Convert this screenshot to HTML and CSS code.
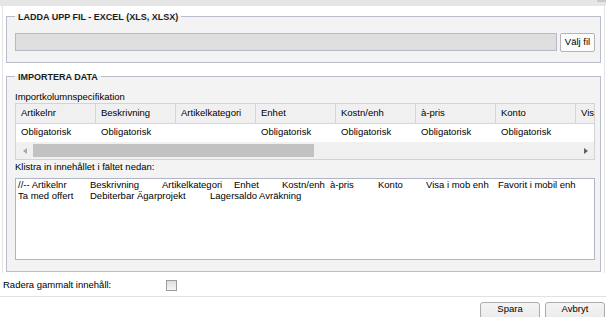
FILE: index.html
```html
<!DOCTYPE html>
<html lang="sv">
<head>
    <meta charset="UTF-8">
    <meta name="viewport" content="width=device-width, initial-scale=1.0">
    <title>Importera artiklar</title>
    <link rel="stylesheet" href="styles.css">
</head>
<body>
    <div class="topbar"><span class="corner"></span></div>
    <div class="panel">
        <fieldset class="group">
            <legend>LADDA UPP FIL - EXCEL (XLS, XLSX)</legend>
            <div class="file-row">
                <div class="file-name"></div>
                <button class="btn-pick">Välj fil</button>
            </div>
        </fieldset>
        <fieldset class="group group-import">
            <legend>IMPORTERA DATA</legend>
            <div class="caption">Importkolumnspecifikation</div>
            <div class="grid">
                <table>
                    <tr>
                        <th>Artikelnr</th><th>Beskrivning</th><th>Artikelkategori</th><th>Enhet</th>
                        <th>Kostn/enh</th><th>à-pris</th><th>Konto</th><th class="last">Visa</th>
                    </tr>
                    <tr>
                        <td>Obligatorisk</td><td>Obligatorisk</td><td></td><td>Obligatorisk</td>
                        <td>Obligatorisk</td><td>Obligatorisk</td><td>Obligatorisk</td><td class="last"></td>
                    </tr>
                </table>
                <div class="hscroll">
                    <span class="arrow"><i class="tri-left"></i></span>
                    <span class="thumb"></span>
                    <span class="track"></span>
                    <span class="arrow"><i class="tri-right"></i></span>
                </div>
            </div>
            <div class="caption caption-paste">Klistra in innehållet i fältet nedan:</div>
            <textarea class="paste" spellcheck="false">//-- Artikelnr	Beskrivning	Artikelkategori	Enhet	Kostn/enh	à-pris	Konto	Visa i mob enh	Favorit i mobil enh
Ta med offert	Debiterbar Ägarprojekt	Lagersaldo Avräkning</textarea>
        </fieldset>
    </div>
    <div class="option-row">
        <label for="clearOld">Radera gammalt innehåll:</label>
        <input type="checkbox" id="clearOld">
    </div>
    <div class="divider"></div>
    <div class="footer">
        <button class="btn">Spara</button>
        <button class="btn">Avbryt</button>
    </div>
</body>
</html>
```

FILE: styles.css
```css
body{
    margin: 0;
    background: #ffffff;
    font-family: "Liberation Sans", Arial, sans-serif;
    font-size: 9.5px;
    line-height: 11px;
    color: #000;
}
.topbar{
    height: 6px;
    background: #e6e6e6;
    display: flex;
    justify-content: flex-end;
}
.topbar .corner{
    width: 9px;
    height: 2px;
    background: #c9c9c9;
}
.panel{
    margin: 0 1px 0 2px;
    padding: 4px 0 1px;
    border-left: 1px solid #e4e4e4;
    border-right: 1px solid #e4e4e4;
}
.group{
    margin: 0 3px;
    padding: 10px 5px 10px 8px;
    border: 1px solid #babdcc;
    background: #f3f3f3;
    min-width: 0;
}
.group legend{
    padding: 2px 3px 0;
    font-size: 9px;
    font-weight: bold;
    line-height: 11px;
    color: #1c1c1c;
}
.group-import{
    margin-top: 7px;
    padding: 8px 5px 11px 8px;
}
.file-row{
    display: flex;
    gap: 3px;
    align-items: flex-start;
}
.file-name{
    flex: 1;
    height: 18px;
    box-sizing: border-box;
    background: #dedede;
    border: 1px solid #b6b9c8;
}
.btn-pick{
    width: 35px;
    height: 19px;
    margin: 0;
    padding: 0 0 2px;
    font: inherit;
    color: #000;
    background: #fcfcfc;
    border: 1px solid #b4b4b4;
    border-radius: 2px;
}
.caption{
    margin-bottom: 1px;
}
.caption-paste{
    margin: 1px 0 6px;
}
.grid{
    border: 1px solid #d3d3d3;
    overflow: hidden;
    background: #fff;
}
.grid table{
    table-layout: fixed;
    width: 578px;
    border-collapse: separate;
    border-spacing: 0;
}
.grid th, .grid td{
    width: 74px;
    padding: 0 0 0 5px;
    text-align: left;
    vertical-align: top;
    white-space: nowrap;
    overflow: hidden;
}
.grid th.last, .grid td.last{
    width: 13px;
    border-right: none;
}
.grid th{
    height: 16px;
    padding-top: 3px;
    font-weight: normal;
    background: #f0f0f0;
    border-right: 1px solid #d5d5d5;
    border-bottom: 1px solid #d5d5d5;
}
.grid td{
    height: 16px;
    padding-top: 2px;
    padding-right: 1px;
}
.hscroll{
    display: flex;
    height: 17px;
    background: #f0f0f0;
}
.hscroll .arrow{
    width: 17px;
    display: flex;
    align-items: center;
    justify-content: center;
}
.hscroll .thumb{
    width: 281px;
    margin: 2px 0;
    background: #c2c2c2;
}
.hscroll .track{
    flex: 1;
}
.tri-left{
    border-top: 3px solid transparent;
    border-bottom: 3px solid transparent;
    border-right: 4px solid #a8a8a8;
}
.tri-right{
    border-top: 3px solid transparent;
    border-bottom: 3px solid transparent;
    border-left: 4px solid #606060;
}
.paste{
    display: block;
    width: 100%;
    height: 82px;
    box-sizing: border-box;
    margin: 0;
    padding: 0 0 0 2px;
    border: 1px solid #b1b4c5;
    background: #fff;
    font: inherit;
    line-height: 11px;
    color: #000;
    tab-size: 24px;
    resize: none;
    outline: none;
}
.option-row{
    display: flex;
    align-items: flex-start;
    height: 12px;
    margin-top: 6px;
    padding-left: 3px;
}
.option-row label{
    width: 163px;
}
.option-row input{
    appearance: none;
    width: 11px;
    height: 11px;
    margin: 1px 0 0;
    border: 1px solid #9c9c9c;
    background: linear-gradient(#dedede, #f4f4f4);
}
.divider{
    height: 1px;
    margin-top: 5px;
    background: #e2e2e2;
}
.footer{
    display: flex;
    justify-content: flex-end;
    gap: 5px;
    padding: 5px 1px 0 0;
}
.btn{
    width: 60px;
    height: 22px;
    margin: 0;
    padding: 0 0 9px;
    font: inherit;
    color: #000;
    background: linear-gradient(#f4f4f4, #e8e8e8);
    border: 1px solid #ababab;
    border-radius: 3px;
}
```
